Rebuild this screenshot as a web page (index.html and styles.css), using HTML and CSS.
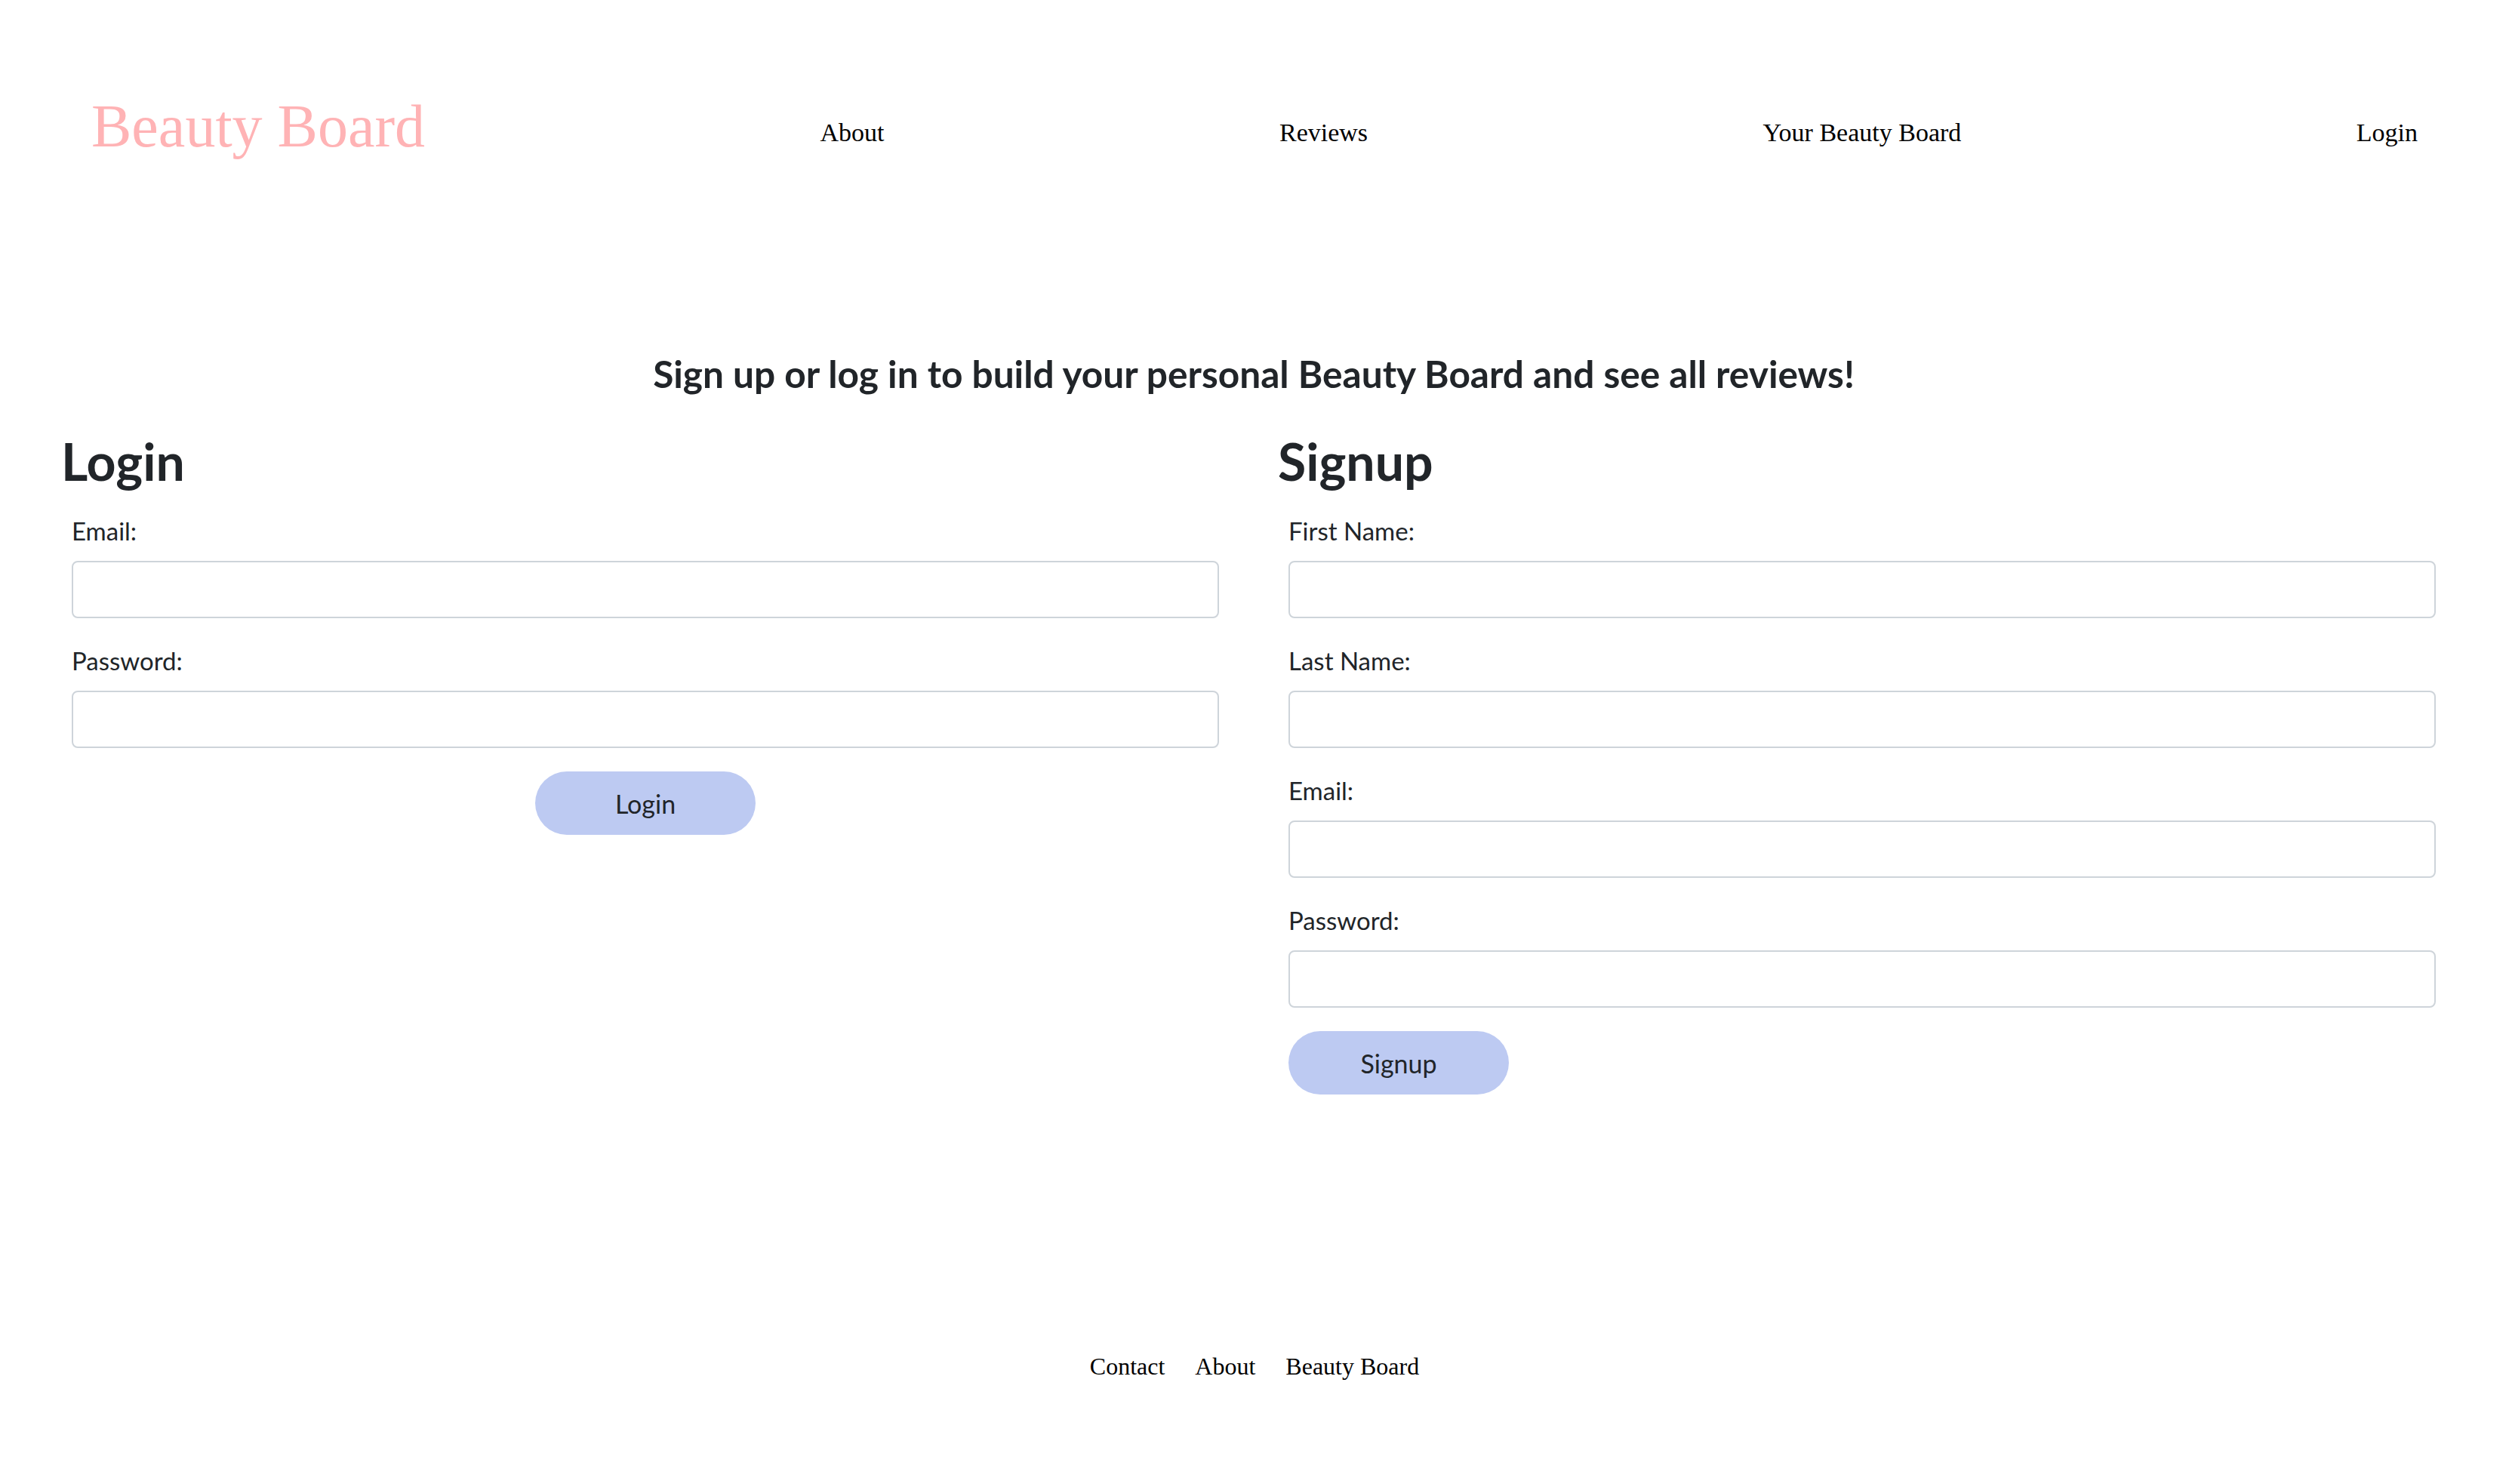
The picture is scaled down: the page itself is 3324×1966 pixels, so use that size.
FILE: index.html
```html
<!DOCTYPE html>
<html lang="en">
<head>
<meta charset="utf-8">
<title>Beauty Board</title>
<link rel="stylesheet" href="styles.css">
</head>
<body>
<header class="site-header">
  <a class="logo" href="#">Beauty Board</a>
  <a class="nav-link" href="#">About</a>
  <a class="nav-link" href="#">Reviews</a>
  <a class="nav-link" href="#">Your Beauty Board</a>
  <a class="nav-link" href="#">Login</a>
</header>
<main class="main">
  <h4 class="intro">Sign up or log in to build your personal Beauty Board and see all reviews!</h4>
  <div class="columns">
    <section class="col">
      <h2 class="col-title">Login</h2>
      <form class="form">
        <div class="group">
          <label class="label">Email:</label>
          <input class="input" type="email">
        </div>
        <div class="group">
          <label class="label">Password:</label>
          <input class="input" type="password">
        </div>
        <button class="btn btn-center" type="button">Login</button>
      </form>
    </section>
    <section class="col">
      <h2 class="col-title">Signup</h2>
      <form class="form">
        <div class="group">
          <label class="label">First Name:</label>
          <input class="input" type="text">
        </div>
        <div class="group">
          <label class="label">Last Name:</label>
          <input class="input" type="text">
        </div>
        <div class="group">
          <label class="label">Email:</label>
          <input class="input" type="email">
        </div>
        <div class="group">
          <label class="label">Password:</label>
          <input class="input" type="password">
        </div>
        <button class="btn" type="button">Signup</button>
      </form>
    </section>
  </div>
</main>
<footer class="site-footer">
  <a class="foot-link" href="#">Contact</a>
  <a class="foot-link" href="#">About</a>
  <a class="foot-link" href="#">Beauty Board</a>
</footer>
</body>
</html>
```
FILE: styles.css
```css
* { box-sizing: border-box; }
html, body { margin: 0; padding: 0; background: #fff; }
body {
  font-family: "Lato", "Noto Sans", sans-serif;
  color: #212529;
  width: 3324px;
  min-height: 1966px;
}
.site-header {
  display: flex;
  justify-content: space-between;
  align-items: center;
  height: 352px;
  padding: 0 121px;
  font-family: "Liberation Serif", "Times New Roman", serif;
}
.logo {
  font-size: 80px;
  color: #ffb3b5;
  text-decoration: none;
  margin-bottom: 18px;
}
.nav-link {
  font-size: 34px;
  color: #000;
  text-decoration: none;
}
.main {
  padding: 114px 83px 0 81px;
}
.intro {
  margin: 0 0 44px;
  text-align: center;
  font-size: 49.6px;
  font-weight: 700;
  line-height: 1.2;
}
.columns {
  display: grid;
  grid-template-columns: 1fr 1fr;
  column-gap: 64px;
  align-items: start;
}
.col-title {
  margin: 0 0 27px;
  font-size: 68px;
  font-weight: 700;
  line-height: 1.2;
}
.form {
  padding: 0 14px;
}
.group {
  margin-bottom: 31px;
}
.label {
  display: block;
  font-size: 33px;
  line-height: 51px;
  margin-bottom: 14px;
}
.input {
  display: block;
  width: 100%;
  height: 76px;
  border: 2px solid #ced4da;
  border-radius: 8px;
  background: #fff;
  font-size: 34px;
}
.btn {
  display: block;
  margin-top: 5px;
  width: 292px;
  height: 84px;
  border: none;
  border-radius: 42px;
  background: #bdcaf2;
  color: #212529;
  font-family: inherit;
  font-size: 34px;
}
.btn-center {
  margin-left: auto;
  margin-right: auto;
}
.site-footer {
  display: flex;
  justify-content: center;
  gap: 40px;
  margin-top: 342px;
  font-family: "Liberation Serif", "Times New Roman", serif;
}
.foot-link {
  font-size: 32px;
  color: #000;
  text-decoration: none;
}
```
